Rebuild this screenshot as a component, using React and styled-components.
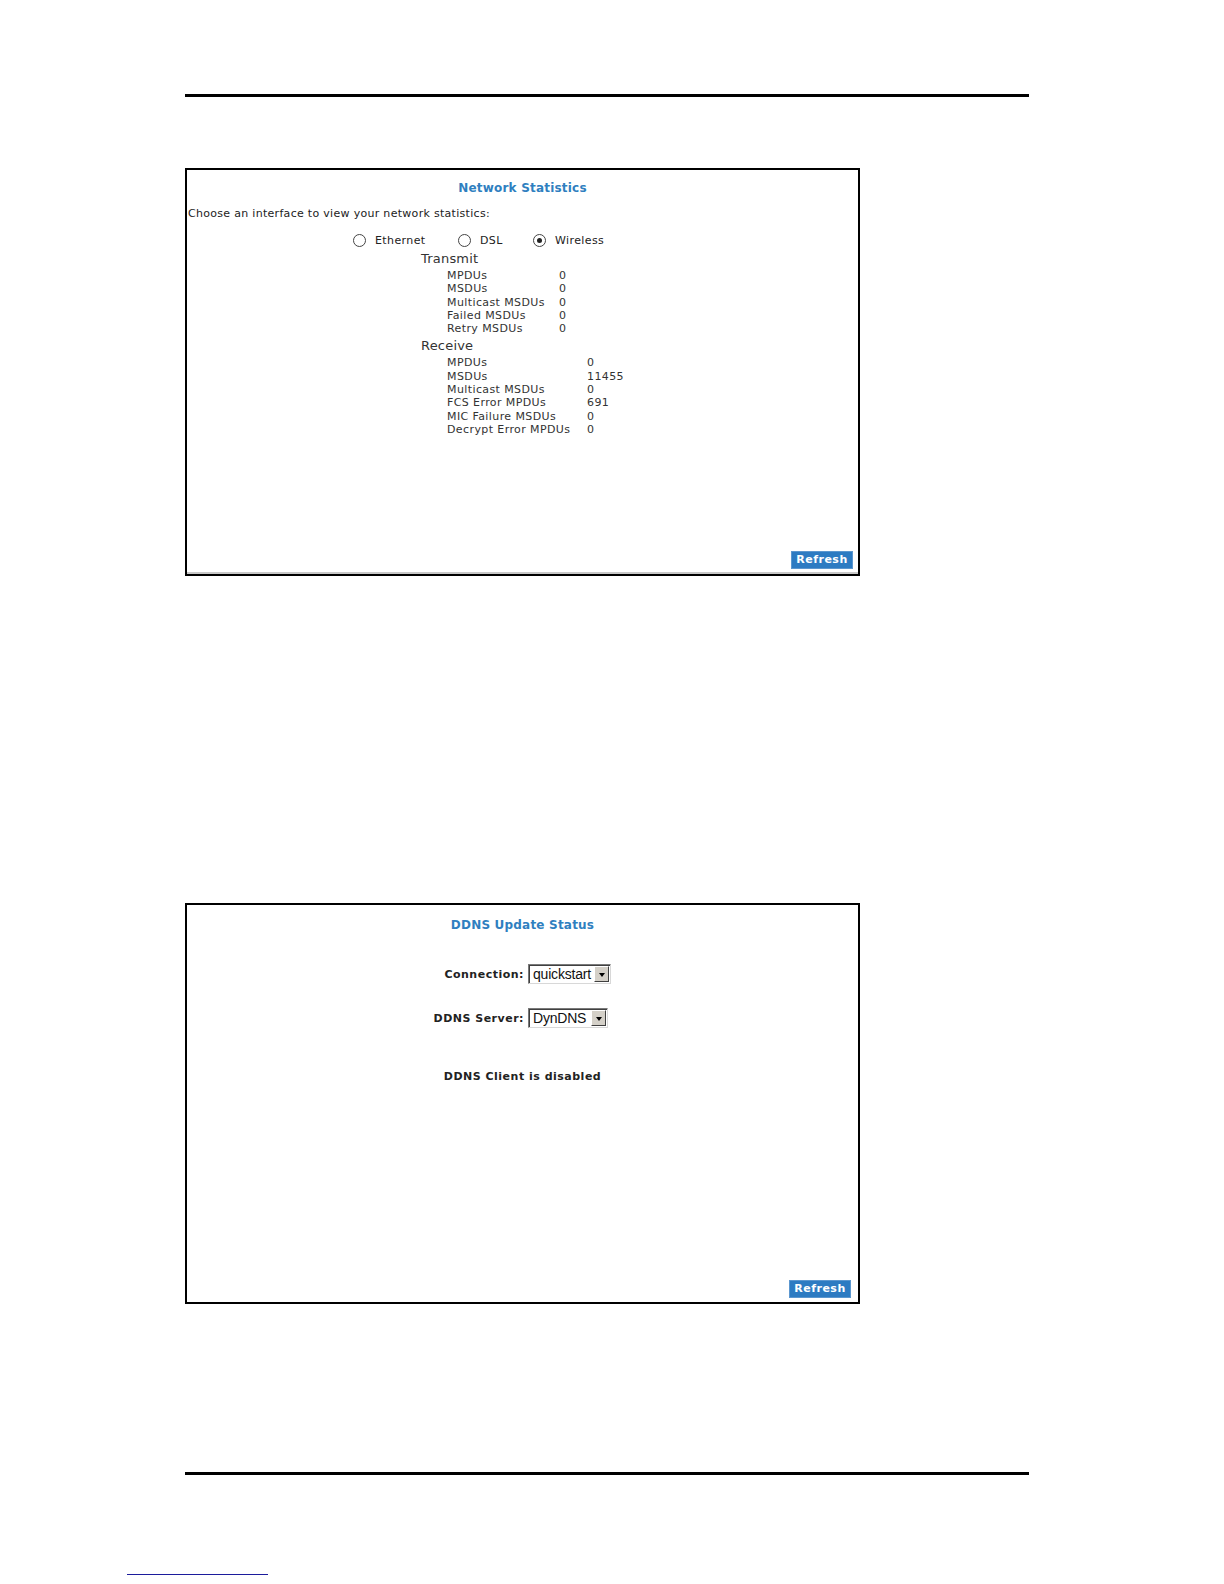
import React from "react";
import styled, { createGlobalStyle } from "styled-components";

const GlobalStyle = createGlobalStyle`
  html, body, #root {
    margin: 0;
    padding: 0;
    width: 1224px;
    height: 1584px;
    overflow: hidden;
    background: #ffffff;
  }
  body {
    font-family: "DejaVu Sans", Verdana, sans-serif;
    color: #333333;
  }
`;

const Page = styled.div`
  padding-top: 94px;
  display: flex;
  flex-direction: column;
  align-items: flex-start;
`;

const Rule = styled.div`
  margin-left: 185px;
  width: 844px;
  height: 3px;
  flex-shrink: 0;
  background: #000000;
  margin-top: ${(props) => props.mt || "0px"};
`;

const FootLink = styled.div`
  margin-left: 127px;
  margin-top: 99px;
  width: 141px;
  height: 1px;
  flex-shrink: 0;
  background: #1c1c9c;
`;

const Panel = styled.div`
  margin-left: 185px;
  margin-top: ${(props) => props.mt};
  width: 675px;
  height: ${(props) => props.h};
  flex-shrink: 0;
  box-sizing: border-box;
  border: 2px solid #000000;
  display: flex;
  flex-direction: column;
`;

const PanelBody = styled.div`
  flex: 1;
  display: flex;
  flex-direction: column;
`;

const PanelFoot = styled.div`
  display: flex;
  justify-content: flex-end;
  padding: 0 ${(props) => props.pr || "5px"} ${(props) => props.pb || "4px"} 0;
  border-bottom: ${(props) => (props.grey ? "2px solid #c8c8c8" : "none")};
`;

const Title = styled.div`
  text-align: center;
  font-size: 12px;
  font-weight: bold;
  color: #2f7fc0;
  margin-top: ${(props) => props.mt};
  letter-spacing: 0.2px;
`;

const Intro = styled.div`
  font-size: 11px;
  color: #222222;
  padding-left: 1px;
  margin-top: 12px;
  letter-spacing: 0.3px;
`;

const RadioRow = styled.div`
  display: flex;
  align-items: center;
  margin-top: 13px;
  padding-left: 166px;
  height: 14px;
`;

const RadioItem = styled.label`
  display: flex;
  align-items: center;
  font-size: 11px;
  color: #222222;
  width: ${(props) => props.w};
  letter-spacing: 0.4px;
`;

const RadioCircle = styled.span`
  width: 13px;
  height: 13px;
  border: 1px solid #444444;
  border-radius: 50%;
  box-sizing: border-box;
  display: inline-flex;
  align-items: center;
  justify-content: center;
  margin-right: 9px;
  background: #ffffff;

  &::after {
    content: "";
    width: 5px;
    height: 5px;
    border-radius: 50%;
    background: ${(props) => (props.checked ? "#222222" : "transparent")};
  }
`;

const Section = styled.div`
  padding-left: 234px;
  margin-top: ${(props) => props.mt};
`;

const SectionHead = styled.div`
  font-size: 13px;
  color: #333333;
  line-height: 16px;
  letter-spacing: 0.2px;
`;

const StatTable = styled.div`
  margin-top: 2px;
  padding-left: 26px;
  display: grid;
  grid-template-columns: ${(props) => props.labelw} auto;
  grid-auto-rows: 13.3px;
  font-size: 11px;
  color: #333333;
  line-height: 13px;
  letter-spacing: 0.4px;
`;

const RefreshButton = styled.button`
  width: 62px;
  height: 18px;
  padding: 0;
  border: 1px solid #5c97cf;
  background: #2d7bc2;
  color: #ffffff;
  font-family: "DejaVu Sans", Verdana, sans-serif;
  font-size: 11px;
  font-weight: bold;
  letter-spacing: 0.5px;
  line-height: 16px;
  cursor: pointer;
`;

const FormRow = styled.div`
  display: flex;
  align-items: center;
  margin-top: ${(props) => props.mt};
  height: 20px;
`;

const FormLabel = styled.div`
  width: 337px;
  text-align: right;
  padding-right: 4px;
  font-size: 11px;
  font-weight: bold;
  color: #222222;
  letter-spacing: 0.5px;
`;

const Select = styled.div`
  width: ${(props) => props.w};
  height: 20px;
  box-sizing: border-box;
  border-top: 1px solid #7a7a7a;
  border-left: 1px solid #7a7a7a;
  border-right: 1px solid #d8d8d8;
  border-bottom: 1px solid #d8d8d8;
  box-shadow: inset 1px 1px 0 #404040;
  display: flex;
  align-items: center;
  background: #ffffff;
  font-family: "Liberation Sans", Arial, sans-serif;
  font-size: 14px;
  color: #111111;
  padding-left: 4px;
`;

const SelectText = styled.span`
  flex: 1;
  letter-spacing: -0.2px;
`;

const SelectArrow = styled.span`
  width: 15px;
  height: 16px;
  margin-right: 1px;
  box-sizing: border-box;
  background: #d4d0c8;
  border-top: 1px solid #ffffff;
  border-left: 1px solid #ffffff;
  border-right: 1px solid #404040;
  border-bottom: 1px solid #404040;
  display: flex;
  align-items: center;
  justify-content: center;

  &::after {
    content: "";
    border-left: 3.5px solid transparent;
    border-right: 3.5px solid transparent;
    border-top: 4px solid #000000;
    margin-top: 1px;
  }
`;

const Notice = styled.div`
  text-align: center;
  font-size: 11px;
  font-weight: bold;
  color: #222222;
  margin-top: 42px;
  letter-spacing: 0.5px;
`;

const transmit = [
  ["MPDUs", "0"],
  ["MSDUs", "0"],
  ["Multicast MSDUs", "0"],
  ["Failed MSDUs", "0"],
  ["Retry MSDUs", "0"],
];

const receive = [
  ["MPDUs", "0"],
  ["MSDUs", "11455"],
  ["Multicast MSDUs", "0"],
  ["FCS Error MPDUs", "691"],
  ["MIC Failure MSDUs", "0"],
  ["Decrypt Error MPDUs", "0"],
];

const Stats = ({ rows, labelw }) => (
  <StatTable labelw={labelw}>
    {rows.map(([label, value], i) => (
      <React.Fragment key={i}>
        <span>{label}</span>
        <span>{value}</span>
      </React.Fragment>
    ))}
  </StatTable>
);

const App = () => {
  return (
    <Page>
      <GlobalStyle />
      <Rule />

      <Panel mt="71px" h="408px">
        <PanelBody>
          <Title mt="11px">Network Statistics</Title>
          <Intro>Choose an interface to view your network statistics:</Intro>
          <RadioRow>
            <RadioItem w="105px">
              <RadioCircle />
              Ethernet
            </RadioItem>
            <RadioItem w="75px">
              <RadioCircle />
              DSL
            </RadioItem>
            <RadioItem>
              <RadioCircle checked />
              Wireless
            </RadioItem>
          </RadioRow>
          <Section mt="4px">
            <SectionHead>Transmit</SectionHead>
            <Stats rows={transmit} labelw="112px" />
          </Section>
          <Section mt="3px">
            <SectionHead>Receive</SectionHead>
            <Stats rows={receive} labelw="140px" />
          </Section>
        </PanelBody>
        <PanelFoot grey pr="5px" pb="3px">
          <RefreshButton>Refresh</RefreshButton>
        </PanelFoot>
      </Panel>

      <Panel mt="327px" h="401px">
        <PanelBody>
          <Title mt="13px">DDNS Update Status</Title>
          <FormRow mt="32px">
            <FormLabel>Connection:</FormLabel>
            <Select w="83px">
              <SelectText>quickstart</SelectText>
              <SelectArrow />
            </Select>
          </FormRow>
          <FormRow mt="24px">
            <FormLabel>DDNS Server:</FormLabel>
            <Select w="80px">
              <SelectText>DynDNS</SelectText>
              <SelectArrow />
            </Select>
          </FormRow>
          <Notice>DDNS Client is disabled</Notice>
        </PanelBody>
        <PanelFoot pr="7px" pb="4px">
          <RefreshButton>Refresh</RefreshButton>
        </PanelFoot>
      </Panel>

      <Rule mt="168px" />
      <FootLink />
    </Page>
  );
};

export default App;
